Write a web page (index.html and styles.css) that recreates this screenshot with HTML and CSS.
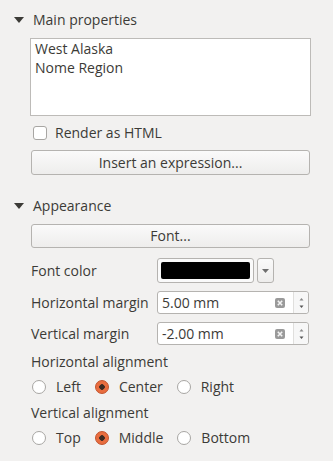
FILE: index.html
```html
<!DOCTYPE html>
<html>
<head>
<meta charset="utf-8">
<link rel="stylesheet" href="styles.css">
</head>
<body>
<div class="panel">
  <div class="section-head">
    <svg class="arrow" width="10" height="6" viewBox="0 0 10 6"><path d="M0 0 H10 L5 6 Z" fill="#3c3b37"/></svg>
    <span>Main properties</span>
  </div>
  <div class="section-body">
    <div class="textarea"><div>West Alaska</div><div>Nome Region</div></div>
    <label class="check-row"><span class="checkbox"></span><span>Render as HTML</span></label>
    <div class="button btn-expr">Insert an expression...</div>
  </div>

  <div class="section-head head2">
    <svg class="arrow" width="10" height="6" viewBox="0 0 10 6"><path d="M0 0 H10 L5 6 Z" fill="#3c3b37"/></svg>
    <span>Appearance</span>
  </div>
  <div class="section-body">
    <div class="button btn-font">Font...</div>
    <div class="form-grid">
      <div class="label">Font color</div>
      <div class="color-ctl">
        <div class="color-btn"><div class="swatch"></div></div>
        <div class="drop-btn"><svg width="7" height="4" viewBox="0 0 7 4"><path d="M0 0 H7 L3.5 4 Z" fill="#6e6e6e"/></svg></div>
      </div>
      <div class="label">Horizontal margin</div>
      <div class="spin">
        <span class="spin-text">5.00 mm</span>
        <span class="clear"><svg width="10" height="10" viewBox="0 0 10 10"><rect x="0" y="0" width="10" height="10" rx="2" fill="#9a9a9a"/><path d="M2.8 2.8 L7.2 7.2 M7.2 2.8 L2.8 7.2" stroke="#f4f4f4" stroke-width="1.6"/></svg></span>
        <span class="arrows"><svg width="5" height="12" viewBox="0 0 5 12"><path d="M2.5 1 L4.5 3.5 H0.5 Z" fill="#8a8a8a"/><path d="M0.5 8.5 H4.5 L2.5 11 Z" fill="#555"/></svg></span>
      </div>
      <div class="label">Vertical margin</div>
      <div class="spin">
        <span class="spin-text">-2.00 mm</span>
        <span class="clear"><svg width="10" height="10" viewBox="0 0 10 10"><rect x="0" y="0" width="10" height="10" rx="2" fill="#9a9a9a"/><path d="M2.8 2.8 L7.2 7.2 M7.2 2.8 L2.8 7.2" stroke="#f4f4f4" stroke-width="1.6"/></svg></span>
        <span class="arrows"><svg width="5" height="12" viewBox="0 0 5 12"><path d="M2.5 1 L4.5 3.5 H0.5 Z" fill="#8a8a8a"/><path d="M0.5 8.5 H4.5 L2.5 11 Z" fill="#555"/></svg></span>
      </div>
    </div>
    <div class="group-label">Horizontal alignment</div>
    <div class="radio-row">
      <span class="radio-item"><span class="radio"></span>Left</span>
      <span class="radio-item"><span class="radio on"></span>Center</span>
      <span class="radio-item"><span class="radio"></span>Right</span>
    </div>
    <div class="group-label">Vertical alignment</div>
    <div class="radio-row">
      <span class="radio-item"><span class="radio"></span>Top</span>
      <span class="radio-item"><span class="radio on"></span>Middle</span>
      <span class="radio-item"><span class="radio"></span>Bottom</span>
    </div>
  </div>
</div>
</body>
</html>
```

FILE: styles.css
```css
html, body {
  margin: 0;
  padding: 0;
  background: #f2f1f0;
}
body {
  font-family: "Open Sans", "DejaVu Sans", sans-serif;
  font-size: 14px;
  line-height: 18px;
  color: #3c3b37;
  width: 333px;
  height: 461px;
  overflow: hidden;
}
.panel {
  padding: 11px 23px 0 14px;
}
.section-head {
  display: flex;
  align-items: center;
  height: 18px;
  gap: 9px;
}
.head2 {
  margin-top: 22px;
}
.arrow {
  flex: none;
}
.section-body {
  padding-left: 16px;
}
.textarea {
  margin-top: 9px;
  background: #fff;
  border: 1px solid #bdbbb8;
  padding: 0 4px;
  box-sizing: border-box;
  line-height: 19px;
  color: #3c3b37;
  margin-right: -1px;
  height: 78px;
}
.check-row {
  display: flex;
  align-items: center;
  gap: 8px;
  margin-top: 9px;
  height: 16px;
  padding-left: 3px;
}
.checkbox {
  width: 12px;
  height: 12px;
  border: 1px solid #a8a6a3;
  border-radius: 3px;
  background: #fff;
  box-sizing: content-box;
}
.button {
  height: 25px;
  box-sizing: border-box;
  border: 1px solid #b5b3b0;
  border-radius: 3px;
  background: linear-gradient(#fafafa, #eeedec);
  display: flex;
  align-items: center;
  justify-content: center;
  margin-left: 1px;
}
.btn-expr {
  margin-top: 9px;
}
.btn-font {
  margin-top: 9px;
  height: 24px;
}
.form-grid {
  display: grid;
  grid-template-columns: 127px 1fr;
  row-gap: 8px;
  margin-top: 10px;
  align-items: center;
}
.label {
  padding-left: 1px;
}
.color-ctl {
  display: flex;
  gap: 3px;
  height: 25px;
}
.color-btn {
  width: 97px;
  box-sizing: border-box;
  border: 1px solid #b5b3b0;
  border-radius: 3px;
  background: #fafafa;
  padding: 3px;
}
.swatch {
  background: #000;
  height: 100%;
  border-radius: 2px;
}
.drop-btn {
  width: 17px;
  box-sizing: border-box;
  border: 1px solid #b5b3b0;
  border-radius: 3px;
  background: linear-gradient(#fafafa, #eeedec);
  display: flex;
  align-items: center;
  justify-content: center;
}
.spin {
  display: flex;
  align-items: center;
  height: 23px;
  box-sizing: border-box;
  border: 1px solid #b5b3b0;
  border-radius: 3px;
  background: #fff;
  margin-right: 1px;
}
.spin-text {
  flex: 1;
  padding-left: 4px;
  color: #3c3b37;
}
.clear {
  display: flex;
  margin-right: 8px;
}
.arrows {
  width: 14px;
  align-self: stretch;
  border-left: 1px solid #e0dfdd;
  display: flex;
  align-items: center;
  justify-content: center;
  background: #f7f7f7;
  border-radius: 0 3px 3px 0;
}
.group-label {
  margin-top: 8px;
  height: 18px;
  display: flex;
  align-items: center;
  padding-left: 1px;
}
.radio-row {
  display: flex;
  align-items: center;
  height: 18px;
  margin-top: 7px;
  padding-left: 2px;
  gap: 14px;
}
.radio-item {
  display: flex;
  align-items: center;
  gap: 10px;
}
.radio {
  width: 14px;
  height: 14px;
  border: 1px solid #a8a6a3;
  border-radius: 50%;
  background: #fff;
  box-sizing: border-box;
}
.radio.on {
  border-color: #c2522b;
  background: radial-gradient(circle, #3c2a22 0 2.5px, #e96d3f 3px);
}
```
